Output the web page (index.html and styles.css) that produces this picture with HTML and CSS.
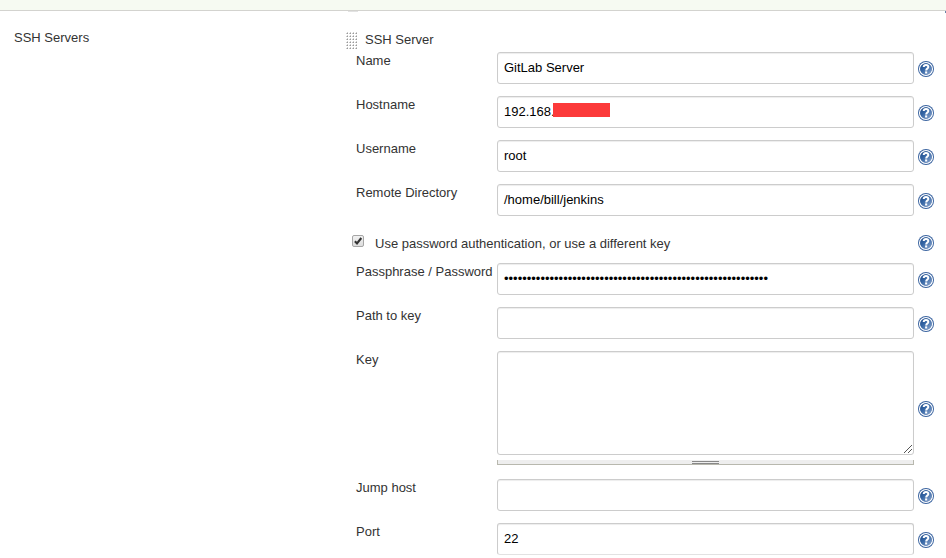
FILE: index.html
```html
<!DOCTYPE html>
<html lang="en">
<head>
<meta charset="utf-8">
<title>SSH Servers</title>
<link rel="stylesheet" href="styles.css">
</head>
<body>
<svg width="0" height="0" class="defs">
  <defs>
    <linearGradient id="blue" x1="0" y1="0" x2="1" y2="1"><stop offset="0" stop-color="#204a87"/><stop offset=".4" stop-color="#3465a4"/><stop offset="1" stop-color="#8fa9d0"/></linearGradient>
    <symbol id="help" viewBox="0 0 16 16">
      <circle cx="8" cy="8" r="8" fill="#3b64a0"/>
      <circle cx="8" cy="8" r="6.400" fill="none" stroke="#fff" stroke-width="1.300"/>
      <circle cx="8" cy="8" r="5.800" fill="url(#blue)"/>
      <path d="M5.700 6C5.800 4.500 6.700 4 8 4c1.500 0 2.300.8 2.300 1.900 0 1.600-2.100 1.700-2.100 3.600" fill="none" stroke="#fff" stroke-width="2"/>
      <rect x="7.100" y="10.400" width="2.100" height="2.100" fill="#fff"/>
    </symbol>
  </defs>
</svg>
<header class="topbar"><i class="clipped-grip"></i><i class="clipped-help"></i></header>
<main class="section">
  <h2 class="section-title">SSH Servers</h2>
  <section class="server">
    <div class="server-head">
      <svg class="grip" width="12" height="17"><defs><pattern id="dots" width="3" height="3" patternUnits="userSpaceOnUse"><path d="M1 0h1v2H0V1h1z" fill="#ccc"/><path d="M1 1h1v1H1z" fill="#999"/></pattern></defs><rect width="12" height="17" fill="url(#dots)"/></svg>
      <span>SSH Server</span>
    </div>
    <div class="row"><label>Name</label><div class="field">GitLab Server</div><svg class="help"><use href="#help"/></svg></div>
    <div class="row"><label>Hostname</label><div class="field">192.168.<span class="redacted"></span></div><svg class="help"><use href="#help"/></svg></div>
    <div class="row"><label>Username</label><div class="field">root</div><svg class="help"><use href="#help"/></svg></div>
    <div class="row"><label>Remote Directory</label><div class="field">/home/bill/jenkins</div><svg class="help"><use href="#help"/></svg></div>
    <div class="check-row">
      <svg class="check" viewBox="0 0 12 12"><defs><linearGradient id="box" x2="0" y2="1"><stop stop-color="#f2f2f2"/><stop offset="1" stop-color="#dcdcdc"/></linearGradient></defs><rect x=".5" y=".5" width="11" height="11" rx="1.500" fill="url(#box)" stroke="#a6a6a6"/><path d="M2.900 6.200l2.100 2.200L9.300 3" fill="none" stroke="#333" stroke-width="2.100"/></svg>
      <span>Use password authentication, or use a different key</span>
      <svg class="help"><use href="#help"/></svg>
    </div>
    <div class="row"><label>Passphrase / Password</label><div class="field">••••••••••••••••••••••••••••••••••••••••••••••••••••••••••</div><svg class="help"><use href="#help"/></svg></div>
    <div class="row"><label>Path to key</label><div class="field"></div><svg class="help"><use href="#help"/></svg></div>
    <div class="row row-key"><label>Key</label>
      <div class="area-wrap">
        <div class="field area"><svg class="corner" width="9" height="9" viewBox="0 0 9 9" shape-rendering="crispEdges"><path d="M.5 8.500l8-8M4.500 8.500l4-4" stroke="#555" fill="none"/></svg></div>
        <div class="resizer"><i></i></div>
      </div>
      <svg class="help"><use href="#help"/></svg></div>
    <div class="row"><label>Jump host</label><div class="field"></div><svg class="help"><use href="#help"/></svg></div>
    <div class="row"><label>Port</label><div class="field last">22</div><svg class="help"><use href="#help"/></svg></div>
  </section>
</main>
</body>
</html>
```
FILE: styles.css
```css
* { box-sizing: border-box; }
body { margin: 0; height: 558px; overflow: hidden; background: #fff; color: #333; font: 13px/16px "Liberation Sans", Arial, sans-serif; }
.defs { position: absolute; }
.topbar { position: relative; height: 11px; background: #f6faf2; border-bottom: 1px solid #d3d3cf; }
.clipped-grip { position: absolute; left: 348px; top: 11px; width: 10px; height: 1px; background: #e2e2e2; }
.clipped-help { position: absolute; right: 0; top: 11px; width: 1px; height: 2px; background: #6983a8; }
.section { display: grid; grid-template-columns: 332px 600px; padding-left: 14px; }
.section-title { margin: 19px 0 0; font: inherit; }
.server { padding-top: 21px; }
.server-head { display: flex; height: 20px; gap: 7px; }
.row { display: grid; grid-template-columns: 141px 417px 16px; height: 44px; padding-left: 10px; }
.row label { padding-top: 1px; white-space: nowrap; }
.row .help { margin: 9px 0 0 4px; }
.help { display: block; width: 16px; height: 16px; }
.field { width: 417px; height: 32px; padding: 7px 6px; border: 1px solid #ccc; border-radius: 3px; color: #000; background: #fff; box-shadow: inset 0 1px 1px rgba(0, 0, 0, .075); white-space: nowrap; overflow: hidden; }
.field.last { border-bottom-color: #e2e2e2; }
.redacted { display: inline-block; width: 57px; height: 14px; margin: -1px 0 0 -2px; background: #fc3a3a; vertical-align: top; }
.check-row { display: flex; height: 35px; padding: 7px 0 0 6px; }
.check { width: 12px; height: 12px; margin-right: 11px; }
.check-row span { width: 543px; padding-top: 1px; }
.row-key { height: 128px; }
.row-key .help { margin-top: 50px; }
.area { position: relative; height: 104px; }
.corner { position: absolute; right: 1px; bottom: 0; }
.resizer { height: 5px; margin-top: 5px; background: #eee; border: 1px solid #b8b8ae; border-top: 0; }
.resizer i { display: block; width: 27px; height: 4px; margin: 0 auto; background: linear-gradient(transparent 25%, #888 25% 50%, transparent 50% 75%, #888 75%); }
```
